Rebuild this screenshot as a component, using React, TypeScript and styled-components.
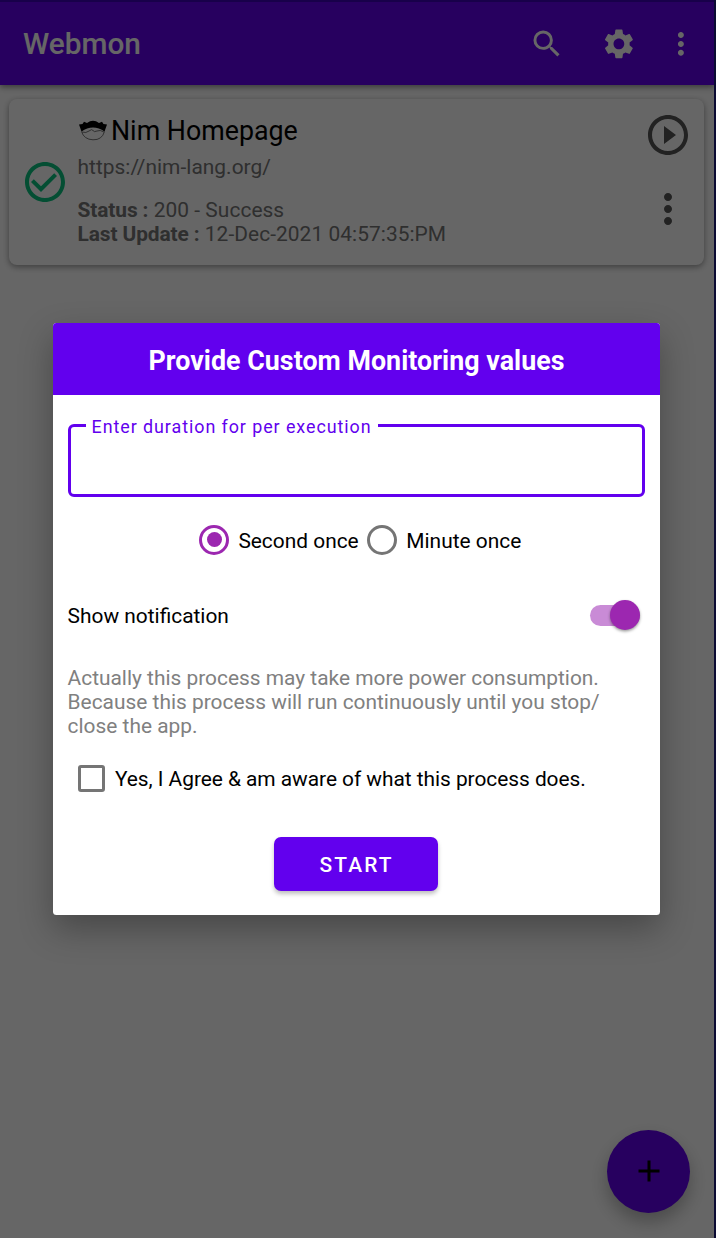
import React from 'react';
import styled, { createGlobalStyle } from 'styled-components';
import { MdSearch, MdSettings, MdMoreVert, MdAdd, MdPlayCircleOutline, MdCheckCircleOutline } from 'react-icons/md';

const GlobalStyle = createGlobalStyle`
  * { box-sizing: border-box; }
  body { margin: 0; background: #fff; font-family: Roboto, sans-serif; color: #000; }
  svg { display: block; flex: none; }
`;

const Screen = styled.div`
  position: relative;
  display: flex;
  flex-direction: column;
  height: 1238px;
  width: 716px;
  overflow: hidden;
  background: #fff;
  border-right: 2px solid #0b0b33;
`;

const AppBar = styled.header`
  display: flex;
  align-items: center;
  height: 85px;
  flex: none;
  padding: 0 15px 0 23px;
  background: #6200ee;
  border-top: 2px solid #3d00b8;
  color: #fff;
  box-shadow: 0 2px 6px rgba(0, 0, 0, 0.45);
`;

const AppTitle = styled.h1`
  flex: 1;
  margin: 0;
  font-size: 29.8px;
  font-weight: 500;
  line-height: 36px;
`;

const BarIcon = styled.span<{ $gap?: number }>`
  margin-left: ${(p) => p.$gap ?? 0}px;
  font-size: 35.8px;
`;

const Card = styled.article`
  display: flex;
  width: 695px;
  height: 166px;
  margin: 14px 0 0 9px;
  border-radius: 8px;
  background: #fff;
  box-shadow: 0 2px 6px rgba(0, 0, 0, 0.4);
`;

const StatusIcon = styled.div`
  display: flex;
  align-items: center;
  width: 68.5px;
  padding-left: 11.7px;
  font-size: 48px;
  color: #0cc481;
`;

const CardText = styled.div`
  flex: 1;
  font-size: 20.9px;
  line-height: 24px;
  color: #757575;
`;

const SiteName = styled.h2`
  display: flex;
  align-items: center;
  gap: 3.5px;
  margin: 16px 0 0;
  font-size: 26.8px;
  font-weight: 400;
  line-height: 32px;
  color: #000;
`;

const SiteUrl = styled.div`
  margin: 8px 0 19px;
  letter-spacing: 0.03px;
`;

const Detail = styled.div`
  letter-spacing: 0.06px;

  b {
    letter-spacing: -0.1px;
  }
`;

const CardActions = styled.div`
  display: flex;
  flex-direction: column;
  gap: 26px;
  padding: 12px 11.7px 0 0;
  font-size: 48px;
  color: #555;
`;

const Fab = styled.button`
  position: absolute;
  left: 607px;
  top: 1130px;
  display: grid;
  place-items: center;
  width: 83px;
  height: 83px;
  padding: 0 0 1px;
  border: 0;
  border-radius: 50%;
  background: #6200ee;
  color: #000;
  font-size: 36px;
  box-shadow: 0 9px 18px rgba(0, 0, 0, 0.28);
`;

const Scrim = styled.div`
  position: absolute;
  inset: 0;
  display: flex;
  align-items: flex-start;
  padding: 322.5px 0 0 52.6px;
  background: rgba(0, 0, 0, 0.6);
`;

const Dialog = styled.section`
  width: 607.8px;
  height: 592px;
  border-radius: 3.5px;
  overflow: hidden;
  background: #fff;
  box-shadow: 0 14px 34px rgba(0, 0, 0, 0.3);
`;

const DialogHeader = styled.h2`
  display: flex;
  align-items: center;
  justify-content: center;
  height: 72.5px;
  margin: 0;
  padding-top: 4px;
  background: #6200ee;
  color: #fff;
  font-size: 26.8px;
  font-weight: 700;
  letter-spacing: 0.03px;
`;

const DialogBody = styled.div`
  display: flex;
  flex-direction: column;
  padding: 19px 15px 0;
  font-size: 20.9px;
  line-height: 24px;
`;

const Field = styled.fieldset`
  width: 577.6px;
  height: 82.5px;
  margin: 0;
  padding: 0 0 0 15px;
  border: 3px solid #6200ee;
  border-radius: 6px;
`;

const FieldLabel = styled.legend`
  height: 23px;
  padding: 0 6px;
  font-size: 17.9px;
  line-height: 26px;
  letter-spacing: 0.93px;
  color: #6200ee;
`;

const RadioRow = styled.div`
  display: flex;
  align-items: center;
  height: 32px;
  margin: 27px 0 0 131.8px;
`;

const Option = styled.label`
  display: flex;
  align-items: center;
  margin-right: 8.6px;
`;

const OptionText = styled.span<{ $tight?: boolean }>`
  padding-top: 2px;
  letter-spacing: ${(p) => (p.$tight ? '-0.04px' : 'normal')};
`;

const Radio = styled.span<{ $on?: boolean }>`
  display: grid;
  place-items: center;
  width: 30px;
  height: 30px;
  margin-right: 9px;
  border: 3px solid ${(p) => (p.$on ? '#9c27b0' : '#757575')};
  border-radius: 50%;

  &::after {
    content: '';
    width: 15px;
    height: 15px;
    border-radius: 50%;
    background: ${(p) => (p.$on ? '#9c27b0' : 'transparent')};
  }
`;

const SwitchRow = styled.div`
  display: flex;
  align-items: center;
  justify-content: space-between;
  height: 32px;
  margin-top: 43.5px;
  padding-right: 5.2px;
`;

const Track = styled.span`
  display: flex;
  align-items: center;
  justify-content: flex-end;
  width: 50px;
  height: 21px;
  border-radius: 11px;
  background: #c98bd6;
`;

const Thumb = styled.span`
  width: 30px;
  height: 30px;
  border-radius: 50%;
  background: #9c27b0;
  box-shadow: 0 1.5px 3px rgba(0, 0, 0, 0.4);
`;

const Notice = styled.p`
  margin: 35px 0 0;
  color: #808080;
`;

const AgreeRow = styled.label`
  display: flex;
  align-items: center;
  height: 28px;
  margin: 26px 0 0 10px;
`;

const Checkbox = styled.span`
  width: 27px;
  height: 27px;
  margin-right: 10.4px;
  border: 3px solid #757575;
  border-radius: 3px;
`;

const StartButton = styled.button`
  width: 164px;
  height: 54px;
  margin: 45px 0 0 206.5px;
  padding: 2px 0 0 1px;
  border: 0;
  border-radius: 7px;
  background: #6200ee;
  color: #fff;
  font: 500 20.9px/24px Roboto, sans-serif;
  letter-spacing: 2.1px;
  box-shadow: 0 3px 4px rgba(0, 0, 0, 0.25);
`;

function CrownIcon() {
  return (
    <svg width="30" height="22" viewBox="0 0 30 22">
      <path d="M1 4.5 4.5 4 6 1.8 9 3 12 1.2 15 .8 18 1.2 21 3 24 1.8 25.5 4 29 4.5 26.5 11.5Q21 7.6 15 7.6T3.5 11.5Z" fill="#000" />
      <path d="M3.5 11.5Q6 19.5 15 19.8T26.5 11.5M4 12Q8 13.5 11 11T15 10.5 19 11 26 12" fill="none" stroke="#555" strokeWidth=".8" />
    </svg>
  );
}

export default function App() {
  return (
    <Screen>
      <GlobalStyle />
      <AppBar>
        <AppTitle>Webmon</AppTitle>
        <BarIcon><MdSearch /></BarIcon>
        <BarIcon $gap={36.2}><MdSettings /></BarIcon>
        <BarIcon $gap={26.6}><MdMoreVert /></BarIcon>
      </AppBar>
      <Card>
        <StatusIcon><MdCheckCircleOutline /></StatusIcon>
        <CardText>
          <SiteName><CrownIcon />Nim Homepage</SiteName>
          <SiteUrl>https://nim-lang.org/</SiteUrl>
          <Detail><b>Status :</b> 200 - Success</Detail>
          <Detail><b>Last Update :</b> 12-Dec-2021 04:57:35:PM</Detail>
        </CardText>
        <CardActions>
          <MdPlayCircleOutline />
          <MdMoreVert />
        </CardActions>
      </Card>
      <Fab aria-label="Add"><MdAdd /></Fab>
      <Scrim>
        <Dialog>
          <DialogHeader>Provide Custom Monitoring values</DialogHeader>
          <DialogBody>
            <Field><FieldLabel>Enter duration for per execution</FieldLabel></Field>
            <RadioRow>
              <Option><Radio $on /><OptionText>Second once</OptionText></Option>
              <Option><Radio /><OptionText>Minute once</OptionText></Option>
            </RadioRow>
            <SwitchRow>
              <OptionText>Show notification</OptionText>
              <Track><Thumb /></Track>
            </SwitchRow>
            <Notice>
              Actually this process may take more power consumption.<br />
              Because this process will run continuously until you stop/<br />
              close the app.
            </Notice>
            <AgreeRow>
              <Checkbox />
              <OptionText $tight>Yes, I Agree &amp; am aware of what this process does.</OptionText>
            </AgreeRow>
            <StartButton>START</StartButton>
          </DialogBody>
        </Dialog>
      </Scrim>
    </Screen>
  );
}
